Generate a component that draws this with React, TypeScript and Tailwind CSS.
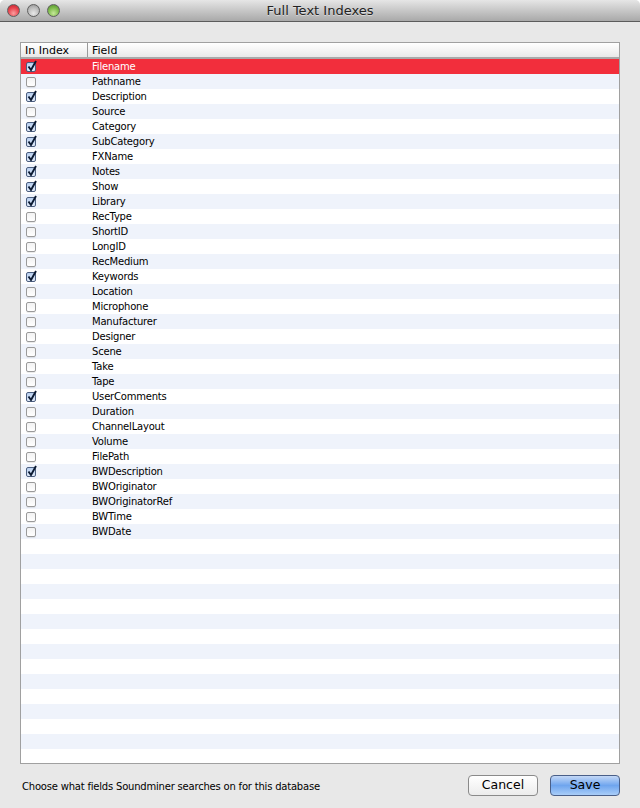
import React from "react";

const fields: [string, boolean][] = [
  ["Filename", true],
  ["Pathname", false],
  ["Description", true],
  ["Source", false],
  ["Category", true],
  ["SubCategory", true],
  ["FXName", true],
  ["Notes", true],
  ["Show", true],
  ["Library", true],
  ["RecType", false],
  ["ShortID", false],
  ["LongID", false],
  ["RecMedium", false],
  ["Keywords", true],
  ["Location", false],
  ["Microphone", false],
  ["Manufacturer", false],
  ["Designer", false],
  ["Scene", false],
  ["Take", false],
  ["Tape", false],
  ["UserComments", true],
  ["Duration", false],
  ["ChannelLayout", false],
  ["Volume", false],
  ["FilePath", false],
  ["BWDescription", true],
  ["BWOriginator", false],
  ["BWOriginatorRef", false],
  ["BWTime", false],
  ["BWDate", false],
];

const emptyRows = 15;

function Light({ className }: { className: string }) {
  return <div className={`w-[13px] h-[13px] rounded-full border border-[#5f5f5f] ${className}`} />;
}

function CheckBox({ checked }: { checked: boolean }) {
  if (!checked) {
    return (
      <div className="w-[10px] h-[10px] rounded-[2px] border border-[#9a9a9a] bg-gradient-to-b from-[#f2f2f2] to-white shadow-[0_1px_0_rgba(0,0,0,0.08)]" />
    );
  }
  return (
    <div className="relative w-[10px] h-[10px] rounded-[2px] border border-[#4c5f80] bg-gradient-to-b from-[#b9d0f0] to-[#dfe9f8]">
      <svg className="absolute -top-[3px] left-0" width="11" height="12" viewBox="0 0 11 12">
        <path d="M1.5 6.5 L4 10 L9 1" fill="none" stroke="#0b1a33" strokeWidth="1.9" />
      </svg>
    </div>
  );
}

function Row({ name, checked, index }: { name: string; checked: boolean; index: number }) {
  const bg = index === 0 ? "bg-[#f22e3c] text-white" : index % 2 === 1 ? "bg-[#eff3fb] text-black" : "bg-white text-black";
  return (
    <div className={`flex items-center h-[15px] shrink-0 ${bg}`}>
      <div className="w-[71px] pl-[5px] flex items-center">
        <CheckBox checked={checked} />
      </div>
      <span className="leading-[15px]">{name}</span>
    </div>
  );
}

export default function App() {
  return (
    <div className="w-[640px] h-[808px] flex flex-col bg-[#e8e8e8] overflow-hidden rounded-t-[5px] text-[10px] tracking-[-0.2px] text-black font-['DejaVu_Sans',sans-serif]">
      <div className="h-[22px] shrink-0 flex items-center relative border-b border-[#5c5c5c] bg-gradient-to-b from-[#e6e6e6] to-[#a9a9a9]">
        <div className="flex items-center gap-[7px] pl-[7px]">
          <Light className="bg-[radial-gradient(circle_at_50%_75%,#f9a0a0,#e8424c_55%,#b8242e)]" />
          <Light className="bg-[radial-gradient(circle_at_50%_75%,#e8e8e8,#bcbcbc_55%,#8e8e8e)]" />
          <Light className="bg-[radial-gradient(circle_at_50%_75%,#c6e89a,#7dbb4a_55%,#4f8c2a)]" />
        </div>
        <div className="absolute inset-0 flex items-center justify-center text-[13px] tracking-normal text-[#222] [text-shadow:0_1px_0_rgba(255,255,255,0.45)]">
          Full Text Indexes
        </div>
      </div>

      <div className="flex-1 flex flex-col px-[20px] pt-[20px]">
        <div className="h-[722px] shrink-0 border border-[#a0a0a0] bg-white overflow-hidden flex flex-col">
          <div className="h-[16px] shrink-0 flex items-center border-b-2 border-[#a9a9a9] bg-gradient-to-b from-white to-[#e9e9e9] text-[11px] tracking-normal">
            <div className="w-[67px] pl-[4px] border-r border-[#9a9a9a] leading-[13px] pt-[1px]">In Index</div>
            <div className="pl-[4px] leading-[13px] pt-[1px]">Field</div>
          </div>
          {fields.map(([name, checked], i) => (
            <Row key={name} name={name} checked={checked} index={i} />
          ))}
          {Array.from({ length: emptyRows }, (_, i) => (
            <div
              key={i}
              className={`h-[15px] shrink-0 ${(i + fields.length) % 2 === 1 ? "bg-[#eff3fb]" : "bg-white"}`}
            />
          ))}
        </div>

        <div className="flex items-center justify-between h-[44px] pl-[2px]">
          <span>Choose what fields Soundminer searches on for this database</span>
          <div className="flex gap-[12px] text-[12.5px] tracking-normal -mt-[1px]">
            <button className="w-[70px] h-[21px] rounded-[4px] border border-[#8a8a8a] bg-gradient-to-b from-white to-[#ececec] leading-none">
              Cancel
            </button>
            <button className="w-[70px] h-[21px] rounded-[4px] border border-[#4a5f88] bg-gradient-to-b from-[#c4d8f6] via-[#6fa5ee] to-[#a9cdf8] leading-none">
              Save
            </button>
          </div>
        </div>
      </div>
    </div>
  );
}
